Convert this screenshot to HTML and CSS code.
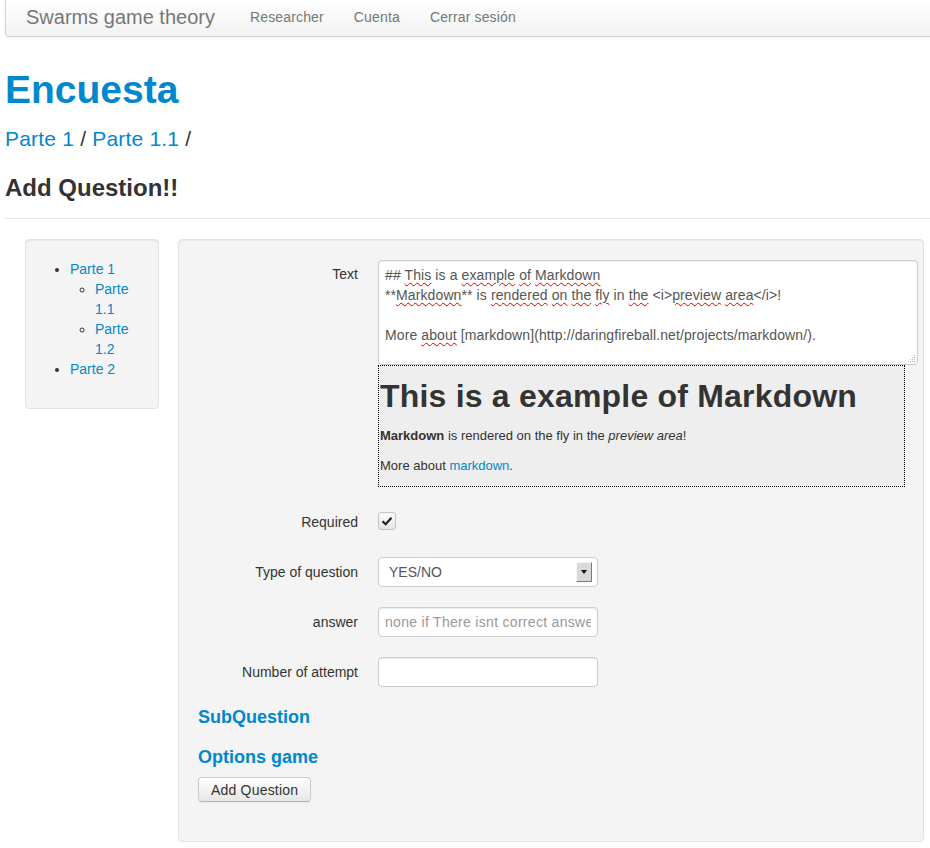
FILE: index.html
```html
<!DOCTYPE html>
<html lang="es">
<head>
<meta charset="utf-8">
<title>Swarms game theory</title>
<link rel="stylesheet" href="styles.css">
</head>
<body>
<div class="page">
  <div class="navbar">
    <a class="brand" href="#">Swarms game theory</a>
    <a class="nav-link" href="#">Researcher</a>
    <a class="nav-link" href="#">Cuenta</a>
    <a class="nav-link" href="#">Cerrar sesión</a>
  </div>

  <h1 class="title">Encuesta</h1>
  <div class="crumbs"><a href="#">Parte 1</a> / <a href="#">Parte 1.1</a> /</div>
  <h3 class="subtitle">Add Question!!</h3>
  <hr class="divider">

  <div class="row">
    <div class="well sidebar">
      <ul class="tree">
        <li><a href="#">Parte 1</a>
          <ul>
            <li><a href="#">Parte 1.1</a></li>
            <li><a href="#">Parte 1.2</a></li>
          </ul>
        </li>
        <li><a href="#">Parte 2</a></li>
      </ul>
    </div>

    <div class="well main">
      <div class="group">
        <div class="label">Text</div>
        <div class="controls">
          <div class="textarea">
            <div>## <span class="sp">This</span> is a <span class="sp">example</span> <span class="sp">of</span> <span class="sp">Markdown</span></div>
            <div>**<span class="sp">Markdown</span>** is <span class="sp">rendered</span> <span class="sp">on</span> <span class="sp">the</span> <span class="sp">fly</span> in <span class="sp">the</span> &lt;i&gt;<span class="sp">preview</span> <span class="sp">area</span>&lt;/i&gt;!</div>
            <div>&nbsp;</div>
            <div>More <span class="sp">about</span> [markdown](http://daringfireball.net/projects/markdown/).</div>
            <svg class="grip" width="10" height="10" viewBox="0 0 10 10"><g fill="#bbb"><rect x="8" y="2" width="1" height="1"/><rect x="6" y="4" width="1" height="1"/><rect x="8" y="4" width="1" height="1"/><rect x="4" y="6" width="1" height="1"/><rect x="6" y="6" width="1" height="1"/><rect x="8" y="6" width="1" height="1"/><rect x="2" y="8" width="1" height="1"/><rect x="4" y="8" width="1" height="1"/><rect x="6" y="8" width="1" height="1"/><rect x="8" y="8" width="1" height="1"/></g></svg>
          </div>
          <div class="preview">
            <h2>This is a example of Markdown</h2>
            <p><strong>Markdown</strong> is rendered on the fly in the <em>preview area</em>!</p>
            <p>More about <a href="#">markdown</a>.</p>
          </div>
        </div>
      </div>

      <div class="group">
        <div class="label">Required</div>
        <div class="controls">
          <span class="checkbox">
            <svg width="18" height="18" viewBox="0 0 18 18"><path d="M4.5 9.2 L7.6 12.2 L13.5 5.8" fill="none" stroke="#222" stroke-width="2.2"/></svg>
          </span>
        </div>
      </div>

      <div class="group">
        <div class="label">Type of question</div>
        <div class="controls">
          <div class="select">
            <span class="select-text">YES/NO</span>
            <span class="select-btn"><span class="arrow"></span></span>
          </div>
        </div>
      </div>

      <div class="group">
        <div class="label">answer</div>
        <div class="controls">
          <input class="input" type="text" placeholder="none if There isnt correct answer">
        </div>
      </div>

      <div class="group">
        <div class="label">Number of attempt</div>
        <div class="controls">
          <input class="input" type="text">
        </div>
      </div>

      <h4 class="section">SubQuestion</h4>
      <h4 class="section">Options game</h4>
      <button class="btn" type="button">Add Question</button>
    </div>
  </div>
</div>
</body>
</html>
```

FILE: styles.css
```css
html, body {
  margin: 0;
  padding: 0;
  background: #fff;
}
body {
  font-family: "Liberation Sans", Arial, sans-serif;
  font-size: 14px;
  line-height: 20px;
  color: #333;
}
a {
  color: #0088cc;
  text-decoration: none;
}
.page {
  padding-left: 5px;
  overflow: hidden;
}

/* navbar */
.navbar {
  height: 36px;
  margin-right: -10px;
  display: flex;
  align-items: center;
  background: linear-gradient(#ffffff, #f2f2f2);
  border: 1px solid #d4d4d4;
  border-top: 0;
  border-radius: 0 0 4px 4px;
  box-shadow: 0 1px 4px rgba(0, 0, 0, 0.065);
}
.brand {
  color: #777;
  font-size: 20px;
  padding: 0 20px 0 20px;
  line-height: 36px;
  margin-top: -2px;
}
.nav-link {
  color: #777;
  font-size: 14px;
  letter-spacing: 0.15px;
  padding: 0 15px;
  line-height: 36px;
  margin-top: -3px;
}

/* headings */
.title {
  margin: 33px 0 0 0;
  font-size: 39px;
  line-height: 40px;
  font-weight: bold;
  color: #0088cc;
}
.crumbs {
  margin-top: 14px;
  font-size: 21px;
  letter-spacing: 0.2px;
  line-height: 30px;
  color: #333;
}
.subtitle {
  margin: 14px 0 0 0;
  font-size: 24px;
  line-height: 40px;
  font-weight: bold;
  color: #333;
}
.divider {
  margin: 10px 0 19px 0;
  border: 0;
  border-top: 1px solid #e5e5e5;
  border-bottom: 1px solid #fff;
  height: 0;
}

/* layout */
.row {
  display: flex;
  align-items: flex-start;
  gap: 19px;
  padding-left: 20px;
}
.well {
  background: #f4f4f4;
  border: 1px solid #e3e3e3;
  border-radius: 4px;
  box-shadow: inset 0 1px 1px rgba(0, 0, 0, 0.05);
  padding: 19px;
}
.sidebar {
  width: 94px;
}
.main {
  width: 706px;
}

/* sidebar tree */
.tree {
  margin: 0 0 10px 25px;
  padding: 0;
  list-style: disc;
}
.tree ul {
  margin: 0 0 0 25px;
  padding: 0;
  list-style: circle;
}

/* form */
.group {
  display: flex;
  margin-bottom: 20px;
}
.label {
  width: 160px;
  flex: none;
  padding-top: 5px;
  margin-right: 20px;
  text-align: right;
  line-height: 20px;
  color: #333;
}
.controls {
  flex: none;
  width: 526px;
  min-height: 30px;
}
.textarea {
  position: relative;
  box-sizing: border-box;
  width: 540px;
  height: 105px;
  margin-top: 1px;
  background: #fff;
  border: 1px solid #ccc;
  border-radius: 4px;
  padding: 4px 6px;
  color: #555;
  line-height: 20px;
  letter-spacing: 0.1px;
  white-space: nowrap;
  box-shadow: inset 0 1px 1px rgba(0, 0, 0, 0.075);
}
.sp {
  text-decoration: underline wavy #e00000;
  text-decoration-thickness: 1px;
  text-underline-offset: 2px;
}
.grip {
  position: absolute;
  right: 1px;
  bottom: 1px;
}
.preview {
  box-sizing: border-box;
  width: 527px;
  background: #eeeeee;
  border: 1px dotted #000;
  padding: 0 0 0 1px;
}
.preview h2 {
  margin: 10px 0;
  font-size: 32px;
  letter-spacing: 0.2px;
  line-height: 40px;
  font-weight: bold;
  color: #333;
}
.preview p {
  margin: 0 0 10px 0;
  font-size: 13px;
}

.checkbox {
  display: block;
  width: 18px;
  height: 18px;
  margin-top: 5px;
  box-sizing: border-box;
  border: 1px solid #c4c4c4;
  border-radius: 3px;
  background: linear-gradient(#fbfbfb, #e6e6e6);
}
.checkbox svg {
  display: block;
  margin: -1px 0 0 -1px;
}

.select {
  box-sizing: border-box;
  width: 220px;
  height: 30px;
  background: #fff;
  border: 1px solid #ccc;
  border-radius: 4px;
  display: flex;
  align-items: center;
  justify-content: space-between;
  padding: 0 5px 0 10px;
  color: #555;
}
.select-btn {
  width: 16px;
  height: 20px;
  box-sizing: border-box;
  background: #d9d9d9;
  border-top: 1px solid #f6f6f6;
  border-left: 1px solid #f6f6f6;
  border-right: 1px solid #7a7a7a;
  border-bottom: 1px solid #7a7a7a;
  display: flex;
  align-items: center;
  justify-content: center;
}
.arrow {
  width: 0;
  height: 0;
  border-left: 3px solid transparent;
  border-right: 3px solid transparent;
  border-top: 4px solid #111;
}

.input {
  display: block;
  box-sizing: border-box;
  width: 220px;
  height: 30px;
  margin: 0;
  padding: 4px 6px;
  font-family: "Liberation Sans", Arial, sans-serif;
  font-size: 14px;
  letter-spacing: 0.3px;
  color: #555;
  background: #fff;
  border: 1px solid #ccc;
  border-radius: 4px;
  box-shadow: inset 0 1px 1px rgba(0, 0, 0, 0.075);
  outline: none;
}
.input::placeholder {
  color: #999;
}

.section {
  margin: 0 0 20px 0;
  font-size: 18px;
  line-height: 20px;
  font-weight: bold;
  color: #0088cc;
}
.section + .section {
  margin-bottom: 10px;
}
.btn {
  display: block;
  height: 25px;
  margin: 0 0 20px 0;
  padding: 0 12px;
  font-family: "Liberation Sans", Arial, sans-serif;
  font-size: 14px;
  letter-spacing: 0.2px;
  line-height: 20px;
  color: #333;
  background: linear-gradient(#ffffff, #e6e6e6);
  border: 1px solid #ccc;
  border-bottom-color: #b3b3b3;
  border-radius: 4px;
  box-shadow: inset 0 1px 0 rgba(255, 255, 255, 0.2), 0 1px 2px rgba(0, 0, 0, 0.05);
}
```
